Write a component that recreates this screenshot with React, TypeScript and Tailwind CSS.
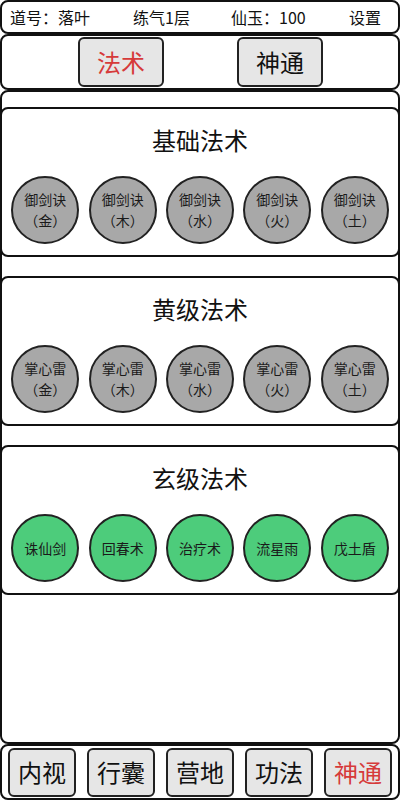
import React from 'react';

const font = { fontFamily: '"Noto Sans CJK SC", "Noto Sans", sans-serif' };

type Skill = { name: string; sub?: string };

const sections: { title: string; green?: boolean; skills: Skill[] }[] = [
  {
    title: '基础法术',
    skills: ['金', '木', '水', '火', '土'].map((e) => ({ name: '御剑诀', sub: `（${e}）` })),
  },
  {
    title: '黄级法术',
    skills: ['金', '木', '水', '火', '土'].map((e) => ({ name: '掌心雷', sub: `（${e}）` })),
  },
  {
    title: '玄级法术',
    green: true,
    skills: [{ name: '诛仙剑' }, { name: '回春术' }, { name: '治疗术' }, { name: '流星雨' }, { name: '戊土盾' }],
  },
];

const navItems = ['内视', '行囊', '营地', '功法', '神通'];

const SkillCard = ({ title, green, skills }: { title: string; green?: boolean; skills: Skill[] }) => (
  <div className="-mx-[2px] h-[150px] shrink-0 rounded-lg border-2 border-[#111] bg-white pt-[15px]">
    <h2 className="text-center text-[24px] leading-[32px] text-[#111]">{title}</h2>
    <div className="mt-[20px] flex justify-evenly">
      {skills.map((s, i) => (
        <div
          key={i}
          className={`flex h-[68px] w-[68px] flex-col items-center justify-center rounded-full border-2 border-[#222] text-[14px] leading-[21px] text-[#1a1a1a] ${
            green ? 'bg-[#4dcc7b]' : 'bg-[#a8a8a8]'
          }`}
        >
          <span>{s.name}</span>
          {s.sub && <span>{s.sub}</span>}
        </div>
      ))}
    </div>
  </div>
);

export default function App() {
  return (
    <div className="flex h-[800px] w-[400px] flex-col bg-white" style={font}>
      {/* top status */}
      <div className="flex h-[34px] shrink-0 items-center rounded-lg border-2 border-[#111] text-[16px] text-[#111]">
        <span className="ml-[8px] w-[123px]">道号：落叶</span>
        <span className="w-[98px]">练气1层</span>
        <span className="w-[118px]">仙玉：100</span>
        <span>设置</span>
      </div>

      {/* tabs */}
      <div className="flex h-[56px] shrink-0 items-center rounded-lg border-2 border-[#111] pl-[76px]">
        <button className="h-[50px] w-[86px] rounded-md border-2 border-[#222] bg-[#e6e6e6] text-[24px] text-[#d63a3a]">
          法术
        </button>
        <button className="ml-[73px] h-[50px] w-[86px] rounded-md border-2 border-[#222] bg-[#e6e6e6] text-[24px] text-[#111]">
          神通
        </button>
      </div>

      {/* content */}
      <div className="flex flex-1 flex-col gap-[19px] overflow-hidden rounded-lg border-2 border-[#111] pt-[15px]">
        {sections.map((sec) => (
          <SkillCard key={sec.title} {...sec} />
        ))}
      </div>

      {/* bottom nav */}
      <div className="flex h-[56px] shrink-0 items-center justify-between rounded-lg border-2 border-[#111] px-[6px]">
        {navItems.map((n) => (
          <button
            key={n}
            className={`h-[49px] w-[68px] rounded-md border-2 border-[#222] bg-[#e6e6e6] text-[24px] ${
              n === '神通' ? 'text-[#d63a3a]' : 'text-[#111]'
            }`}
          >
            {n}
          </button>
        ))}
      </div>
    </div>
  );
}
